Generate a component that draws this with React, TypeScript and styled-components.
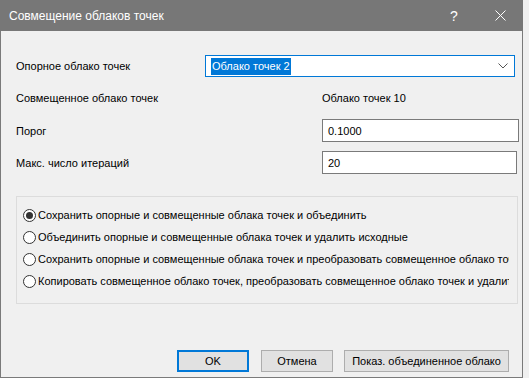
import styled, { createGlobalStyle } from 'styled-components'

const GlobalStyle = createGlobalStyle`
  html, body {
    margin: 0;
    padding: 0;
    background: #f0f0f0;
  }
  body {
    font-family: 'Liberation Sans', Arial, sans-serif;
    font-size: 11px;
    color: #000000;
  }
`

const Window = styled.div`
  width: 523px;
  height: 378px;
  box-sizing: border-box;
  display: flex;
  flex-direction: column;
  background: #f0f0f0;
  border: 1px solid #7a7a7a;
  border-top: none;
`

const TitleBar = styled.div`
  height: 31px;
  margin: 0 -1px;
  background: #777777;
  color: #ffffff;
  display: flex;
  align-items: center;
  padding-left: 9px;
  font-size: 12px;
`

const TitleText = styled.span`
  flex: 1;
`

const TitleButton = styled.span`
  width: 46px;
  height: 31px;
  display: flex;
  align-items: center;
  justify-content: center;
  font-size: 14px;
`

const Body = styled.div`
  flex: 1;
  display: flex;
  flex-direction: column;
  padding: 24px 0 0 15px;
`

const Row = styled.div<{ $h: number; $gap: number }>`
  display: flex;
  align-items: center;
  height: ${(p) => p.$h}px;
  margin-top: ${(p) => p.$gap}px;
`

const Label = styled.span<{ $w: number }>`
  width: ${(p) => p.$w}px;
  flex-shrink: 0;
`

const Combo = styled.div`
  width: 310px;
  height: 22px;
  box-sizing: border-box;
  border: 1px solid #0078d7;
  background: #ffffff;
  display: flex;
  align-items: center;
  padding: 0 6px 0 5px;
`

const Selected = styled.span`
  background: #0078d7;
  color: #ffffff;
  line-height: 17px;
  padding: 0 1px;
  flex: none;
`

const ComboSpacer = styled.span`
  flex: 1;
`

const Input = styled.div<{ $w: number }>`
  width: ${(p) => p.$w}px;
  height: 23px;
  box-sizing: border-box;
  border: 1px solid #7a7a7a;
  background: #ffffff;
  display: flex;
  align-items: center;
  padding-left: 5px;
`

const Group = styled.div`
  margin-top: 22px;
  width: 502px;
  height: 108px;
  box-sizing: border-box;
  border: 1px solid #dcdcdc;
  padding: 7px 0 0 6px;
  display: flex;
  flex-direction: column;
`

const RadioRow = styled.div`
  height: 22px;
  display: flex;
  align-items: center;
  width: 486px;
  overflow: hidden;
  white-space: nowrap;
`

const RadioCircle = styled.span<{ $on?: boolean }>`
  width: 13px;
  height: 13px;
  box-sizing: border-box;
  border: 1px solid #333333;
  border-radius: 50%;
  background: #ffffff;
  flex: none;
  margin-right: 2px;
  display: flex;
  align-items: center;
  justify-content: center;
  &::after {
    content: '';
    display: ${(p) => (p.$on ? 'block' : 'none')};
    width: 7px;
    height: 7px;
    border-radius: 50%;
    background: #333333;
  }
`

const Buttons = styled.div`
  margin-top: auto;
  margin-bottom: 5px;
  display: flex;
  justify-content: flex-end;
  padding-right: 13px;
  gap: 12px;
`

const Button = styled.div<{ $w: number; $default?: boolean }>`
  width: ${(p) => p.$w}px;
  height: 22px;
  box-sizing: border-box;
  background: #e1e1e1;
  border: ${(p) => (p.$default ? '2px solid #0078d7' : '1px solid #adadad')};
  display: flex;
  align-items: center;
  justify-content: center;
  white-space: nowrap;
  &:last-child {
    margin-left: -1px;
  }
`

const radios = [
  'Сохранить опорные и совмещенные облака точек и объединить',
  'Объединить опорные и совмещенные облака точек и удалить исходные',
  'Сохранить опорные и совмещенные облака точек и преобразовать совмещенное облако точек',
  'Копировать совмещенное облако точек, преобразовать совмещенное облако точек и удалить исходное',
]

const App = () => {
  return (
    <>
      <GlobalStyle />
      <Window>
        <TitleBar>
          <TitleText>Совмещение облаков точек</TitleText>
          <TitleButton>?</TitleButton>
          <TitleButton>
            <svg width="11" height="11" viewBox="0 0 11 11">
              <path d="M0.5 0.5 L10.5 10.5 M10.5 0.5 L0.5 10.5" stroke="#ffffff" strokeWidth="1" />
            </svg>
          </TitleButton>
        </TitleBar>
        <Body>
          <Row $h={22} $gap={0}>
            <Label $w={189}>Опорное облако точек</Label>
            <Combo>
              <Selected>Облако точек 2</Selected>
              <ComboSpacer />
              <svg width="10" height="6" viewBox="0 0 10 6">
                <path d="M0.5 0.5 L5 5 L9.5 0.5" stroke="#555555" strokeWidth="1" fill="none" />
              </svg>
            </Combo>
          </Row>
          <Row $h={22} $gap={10}>
            <Label $w={306}>Совмещенное облако точек</Label>
            <span>Облако точек 10</span>
          </Row>
          <Row $h={23} $gap={10}>
            <Label $w={306}>Порог</Label>
            <Input $w={197}>0.1000</Input>
          </Row>
          <Row $h={23} $gap={9}>
            <Label $w={306}>Макс. число итераций</Label>
            <Input $w={195}>20</Input>
          </Row>
          <Group>
            {radios.map((r, i) => (
              <RadioRow key={r}>
                <RadioCircle $on={i === 0} />
                {r}
              </RadioRow>
            ))}
          </Group>
          <Buttons>
            <Button $w={72} $default>
              OK
            </Button>
            <Button $w={72}>Отмена</Button>
            <Button $w={165}>Показ. объединенное облако</Button>
          </Buttons>
        </Body>
      </Window>
    </>
  )
}

export default App
